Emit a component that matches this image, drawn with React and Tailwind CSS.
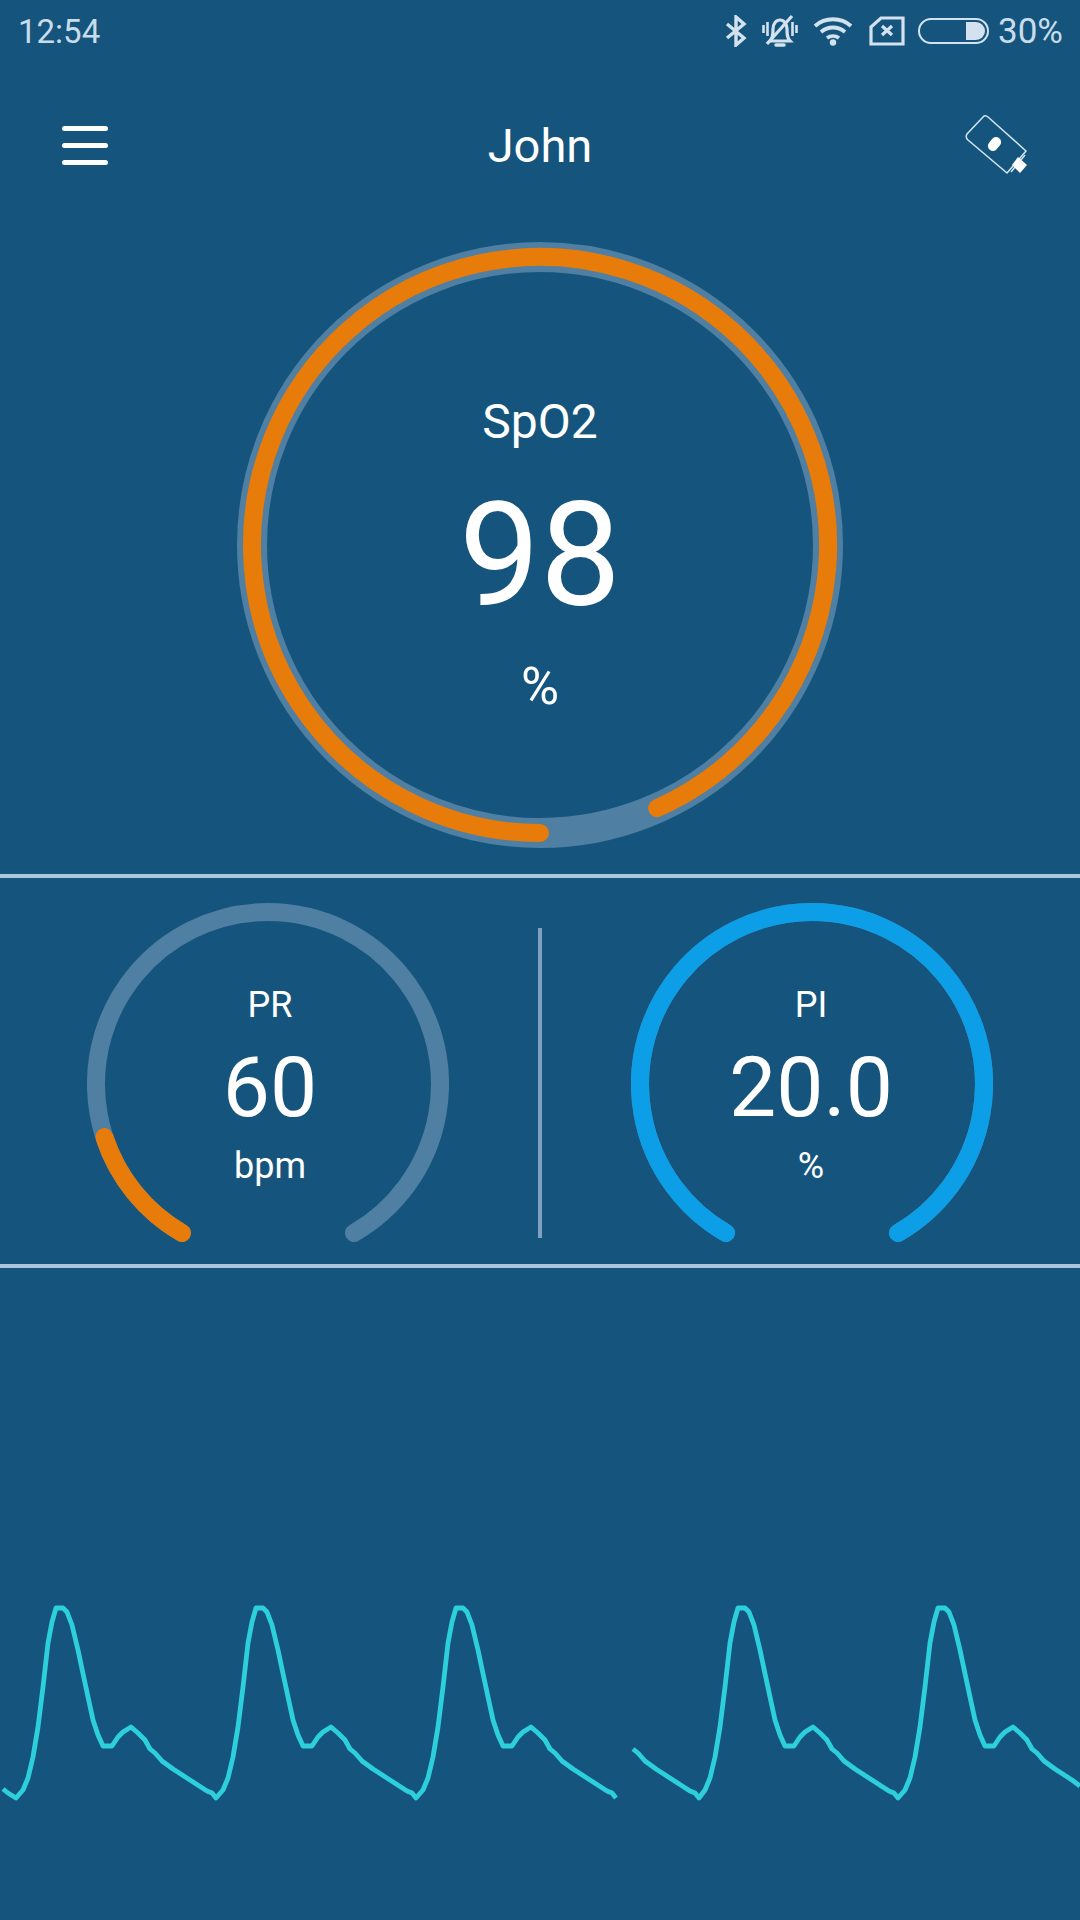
const polar = (cx, cy, r, deg) => {
  // deg measured clockwise from straight down
  const a = (deg * Math.PI) / 180;
  return [cx - r * Math.sin(a), cy + r * Math.cos(a)];
};

const arcPath = (cx, cy, r, from, to) => {
  const [x1, y1] = polar(cx, cy, r, from);
  const [x2, y2] = polar(cx, cy, r, to);
  const large = to - from > 180 ? 1 : 0;
  return `M${x1} ${y1}A${r} ${r} 0 ${large} 1 ${x2} ${y2}`;
};

// one pulse, x offset from the trough and absolute y
const PULSE = [
  [0, 1798], [7, 1790], [12, 1778], [17, 1757], [22, 1727], [27, 1687], [32, 1643], [36, 1622], [40, 1608],
  [47, 1608], [51, 1612], [56, 1625], [62, 1650], [69, 1683], [77, 1720], [82, 1735], [87, 1746], [96, 1746],
  [102, 1737], [107, 1732], [115, 1727], [122, 1733], [129, 1740], [134, 1749], [139, 1753], [146, 1761],
  [157, 1769], [174, 1780], [191, 1791], [196, 1793], [200, 1798],
];

const wave = (troughs, startDx, endX) => {
  const pts = [];
  troughs.forEach((t, i) => {
    PULSE.forEach(([dx, y], j) => {
      if (i === 0 && dx < startDx) return;
      if (i > 0 && j === 0) return;
      const x = t + dx;
      if (x <= endX) pts.push(`${x},${y}`);
    });
  });
  return pts;
};

const FIRST_WAVE = ['3,1789', '8,1793', ...wave([16, 216, 416], 0, 617)].join(' ');
const SECOND_WAVE = [...wave([499, 698, 898], 134, 1080), '1080,1786'].join(' ');

function StatusBar() {
  return (
    <div className="flex h-[60px] items-center justify-between pl-[18px] pr-[17px] pt-[2px] leading-none text-[#c9dcea]">
      <span className="text-[33px]">12:54</span>
      <div className="flex items-center">
        <svg width="22" height="32" viewBox="0 0 22 32" fill="none" stroke="#d3e2ee" strokeWidth="3.4">
          <path d="M2 9l17 14-8 7V2l8 7L2 23" />
        </svg>
        <svg className="ml-[15px]" width="36" height="34" viewBox="0 0 36 34" fill="none" stroke="#d3e2ee">
          <path d="M8 27c3-3 3-7 3-12 0-5 3-9 7-9s7 4 7 9c0 5 0 9 3 12z" strokeWidth="3.200" />
          <path d="M14 31h8" strokeWidth="3.500" strokeLinecap="round" />
          <path d="M30 2L5 30" strokeWidth="3.200" />
          <path d="M1.500 11v8M5.500 8v14M30.500 8v14M34.500 11v8" strokeWidth="2.600" />
        </svg>
        <svg className="ml-[15px]" width="40" height="30" viewBox="0 0 40 30" fill="none" stroke="#d3e2ee" strokeWidth="3.800">
          <path d="M2 10c10-9 26-9 36 0" />
          <path d="M8 16c7-6 17-6 24 0" />
          <path d="M14 22c3.500-2.500 8.500-2.500 12 0" />
          <circle cx="20" cy="26.500" r="3.200" fill="#d3e2ee" stroke="none" />
        </svg>
        <svg className="ml-[16px]" width="36" height="30" viewBox="0 0 36 30" fill="none" stroke="#d3e2ee">
          <path d="M12 2h22v26H2V11z" strokeWidth="3.200" />
          <path d="M13 10l10 9M23 10l-10 9" strokeWidth="3.200" />
        </svg>
        <div className="relative ml-[13px] h-[26px] w-[71px] rounded-full border-[2px] border-[#d3e2ee]">
          <div className="absolute bottom-[2px] right-[2px] top-[2px] w-[19px] rounded-r-full bg-[#d3e2ee]" />
        </div>
        <span className="ml-[9px] text-[35px]">30%</span>
      </div>
    </div>
  );
}

function DeviceIcon() {
  return (
    <svg width="66" height="62" viewBox="0 0 66 62" fill="none">
      <path d="M20 2L3 20q-2 3 1 6l39 33 19-22L24 3q-2-2-4-1z" stroke="#d3e6f2" strokeWidth="1.500" />
      <path d="M61 41L47 58" stroke="#d3e6f2" strokeWidth="1.500" />
      <path d="M54 43l9 8-7 8-8-8z" fill="#ffffff" />
      <rect x="23" y="25" width="15" height="10" rx="5" transform="rotate(-50 30.500 30)" fill="#ffffff" />
    </svg>
  );
}

function Header() {
  return (
    <div className="grid h-[170px] grid-cols-3 items-center px-[50px]">
      <div className="ml-[12px] flex w-[46px] flex-col gap-[12px]">
        <div className="h-[5px] rounded-full bg-white" />
        <div className="h-[5px] rounded-full bg-white" />
        <div className="h-[5px] rounded-full bg-white" />
      </div>
      <span className="justify-self-center text-[47px] leading-none text-white">John</span>
      <div className="justify-self-end">
        <DeviceIcon />
      </div>
    </div>
  );
}

function MainGauge() {
  const c = 303;
  return (
    <div className="relative mx-auto mt-[12px] flex h-[606px] w-[606px] flex-col items-center pt-[152px] text-white">
      <svg className="absolute inset-0" width="606" height="606" viewBox="0 0 606 606" fill="none">
        <circle cx={c} cy={c} r="288" stroke="#4f7fa3" strokeWidth="30" />
        <path d={arcPath(c, c, 288, 0, 336)} stroke="#e87c0a" strokeWidth="18" strokeLinecap="round" />
      </svg>
      <span className="text-[48px] leading-[56px]">SpO2</span>
      <span className="mt-[31px] text-[144px] leading-[150px]">98</span>
      <span className="mt-[28px] text-[52px] leading-[56px]">%</span>
    </div>
  );
}

function SmallGauge({ label, value, unit, color, valueFrom, textShift }) {
  const c = 181;
  return (
    <div className={`relative mt-[25px] flex h-[362px] w-[362px] flex-col items-center pt-[80px] text-white ${textShift}`}>
      <svg className="absolute inset-0" width="362" height="362" viewBox="0 0 362 362" fill="none">
        <path d={arcPath(c, c, 172, 30, 330)} stroke="#4f7fa3" strokeWidth="18" strokeLinecap="round" />
        <path d={arcPath(c, c, 172, 30, valueFrom)} stroke={color} strokeWidth="18" strokeLinecap="round" />
      </svg>
      <span className="text-[36px] leading-[44px]">{label}</span>
      <span className="mt-[16px] text-[84px] leading-[90px]">{value}</span>
      <span className="mt-[11px] text-[36px] leading-[44px]">{unit}</span>
    </div>
  );
}

export default function App() {
  return (
    <div
      className="flex h-[1920px] w-[1080px] flex-col overflow-hidden bg-[#15557d]"
      style={{ fontFamily: 'Roboto, sans-serif' }}
    >
      <StatusBar />
      <Header />
      <MainGauge />
      <div className="mt-[26px] h-[4px] bg-[#aec6dc]" />
      <div className="flex h-[386px]">
        <div className="flex flex-1 justify-center pr-[2px]">
          <SmallGauge label="PR" value="60" unit="bpm" color="#e87c0a" valueFrom={72} textShift="pl-[4px]" />
        </div>
        <div className="mt-[50px] h-[310px] w-[4px] bg-[#7fa0bf]" />
        <div className="flex flex-1 justify-center pl-[2px]">
          <SmallGauge label="PI" value="20.0" unit="%" color="#0c9fe8" valueFrom={330} textShift="pr-[2px]" />
        </div>
      </div>
      <div className="h-[4px] bg-[#aec6dc]" />
      <svg className="block" width="1080" height="652" viewBox="0 1268 1080 652" fill="none">
        <polyline points={FIRST_WAVE} stroke="#2dcfdc" strokeWidth="4.800" strokeLinejoin="round" />
        <polyline points={SECOND_WAVE} stroke="#2dcfdc" strokeWidth="4.800" strokeLinejoin="round" />
      </svg>
    </div>
  );
}
